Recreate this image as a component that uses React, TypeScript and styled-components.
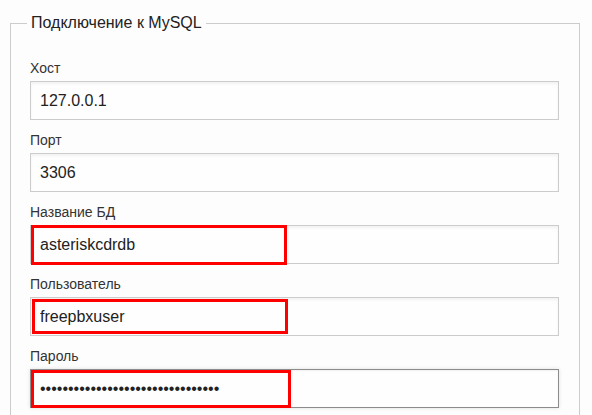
import React from "react";
import styled, { createGlobalStyle } from "styled-components";

const GlobalStyle = createGlobalStyle`
  html, body {
    margin: 0;
    padding: 0;
    background: #fdfdfd;
  }
  body {
    font-family: "Liberation Sans", Arial, sans-serif;
  }
`;

const Page = styled.div`
  padding: 14px 0 0 10px;
`;

const Fieldset = styled.fieldset`
  box-sizing: border-box;
  width: 570px;
  margin: 0;
  padding: 28px 20px 8px 19px;
  border: 1px solid #cccccc;
  min-width: 0;
`;

const Legend = styled.legend`
  margin-left: -3px;
  padding: 0 4px;
  font-size: 16px;
  color: #222222;
`;

const Field = styled.div`
  margin-bottom: 12px;
`;

const Label = styled.label`
  display: block;
  font-size: 14px;
  line-height: 16px;
  margin-bottom: 5px;
  color: #333333;
`;

const InputWrap = styled.div`
  position: relative;
  width: 529px;
`;

const Input = styled.input<{ $focused?: boolean }>`
  box-sizing: border-box;
  display: block;
  width: 529px;
  height: 39px;
  margin: 0;
  padding: 0 9px;
  font-family: "Liberation Sans", Arial, sans-serif;
  font-size: 16px;
  color: #222222;
  background: #fefefe;
  border: 1px solid ${(p) => (p.$focused ? "#8c8c8c" : "#cccccc")};
  border-radius: 0;
  outline: none;
  box-shadow: ${(p) =>
    p.$focused
      ? "0 0 4px rgba(0,0,0,0.12), inset 0 1px 2px rgba(0,0,0,0.06)"
      : "inset 0 2px 3px rgba(0,0,0,0.05)"};
`;

const Highlight = styled.div<{ $top: number; $left: number; $w: number; $h: number }>`
  position: absolute;
  box-sizing: border-box;
  top: ${(p) => p.$top}px;
  left: ${(p) => p.$left}px;
  width: ${(p) => p.$w}px;
  height: ${(p) => p.$h}px;
  border: 3px solid #ff0000;
  pointer-events: none;
`;

type F = {
  label: string;
  value: string;
  type?: string;
  focused?: boolean;
  hl?: { top: number; left: number; w: number; h: number };
};

const fields: F[] = [
  { label: "Хост", value: "127.0.0.1" },
  { label: "Порт", value: "3306" },
  { label: "Название БД", value: "asteriskcdrdb", hl: { top: 0, left: 1, w: 256, h: 40 } },
  { label: "Пользователь", value: "freepbxuser", hl: { top: 2, left: 2, w: 256, h: 35 } },
  {
    label: "Пароль",
    value: "x".repeat(32),
    type: "password",
    focused: true,
    hl: { top: 1, left: 1, w: 260, h: 38 },
  },
];

export default function App() {
  return (
    <>
      <GlobalStyle />
      <Page>
        <Fieldset>
          <Legend>Подключение к MySQL</Legend>
          {fields.map((f) => (
            <Field key={f.label}>
              <Label>{f.label}</Label>
              <InputWrap>
                <Input
                  type={f.type || "text"}
                  defaultValue={f.value}
                  $focused={f.focused}
                  readOnly
                />
                {f.hl && <Highlight $top={f.hl.top} $left={f.hl.left} $w={f.hl.w} $h={f.hl.h} />}
              </InputWrap>
            </Field>
          ))}
        </Fieldset>
      </Page>
    </>
  );
}
